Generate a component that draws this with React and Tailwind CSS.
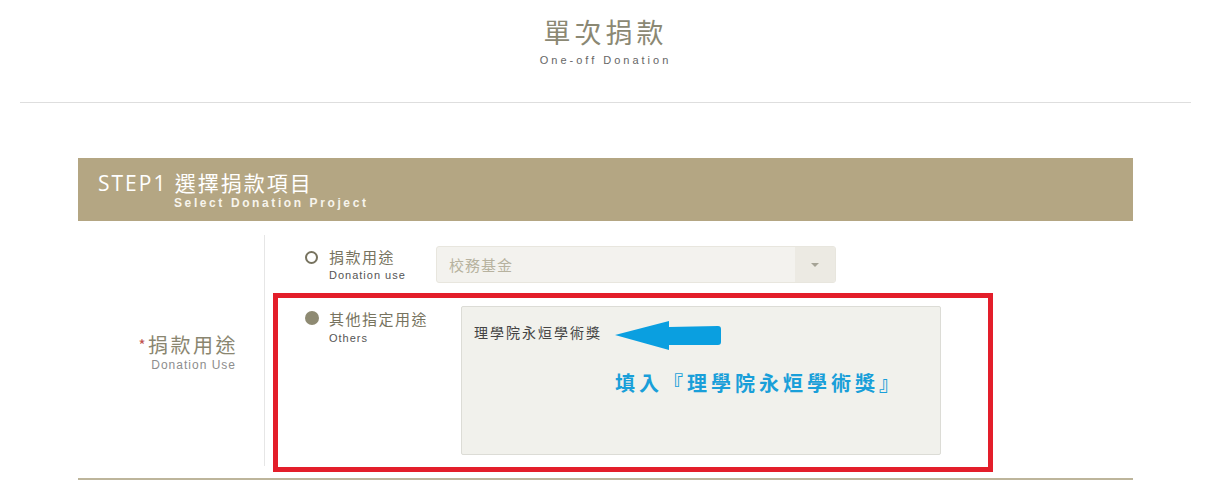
import React from 'react';

const cjk = '"Noto Sans CJK TC", sans-serif';
const latin = '"Liberation Sans", "Noto Sans CJK TC", sans-serif';

const Radio = ({ checked }) =>
  checked ? (
    <span className="block w-[14px] h-[14px] rounded-full bg-[#8e8a72] shrink-0" />
  ) : (
    <span className="block w-[13px] h-[13px] rounded-full border-[2.5px] border-[#77735f] shrink-0" />
  );

const PointerArrow = () => (
  <svg width="108" height="32" viewBox="0 0 108 32" className="absolute left-[152px] top-[13px]">
    <path
      d="M1 15 L55 1 L55 7 L104 6 Q107 6 107 9 L107 22 Q107 25 104 25 L55 25 L55 30 Z"
      fill="#0a9fe0"
    />
  </svg>
);

const App = () => {
  return (
    <div className="w-full bg-white" style={{ fontFamily: latin }}>
      {/* 標題 */}
      <div className="pt-[16px] text-center">
        <h1 className="text-[27px] leading-[32px] tracking-[4px] text-[#8b8873]" style={{ fontFamily: cjk }}>
          單次捐款
        </h1>
        <p className="mt-[5px] text-[11px] leading-[14px] tracking-[3px] text-[#666]">One-off Donation</p>
      </div>
      <div className="mx-[20px] mt-[35px] h-px bg-[#dedede]" />

      {/* STEP1 */}
      <div className="mx-[78px] mt-[55px] border-b-2 border-[#bdb59b]">
        <div className="h-[63px] bg-[#b4a683] pl-[20px] pt-[11px]">
          <div className="text-[21px] leading-[26px] tracking-[2px] text-white" style={{ fontFamily: '"Open Sans", "Noto Sans CJK TC", sans-serif' }}>
            STEP1 <span style={{ fontFamily: cjk }}>選擇捐款項目</span>
          </div>
          <div className="pl-[76px] text-[12px] leading-[14px] font-bold tracking-[2.6px] text-[#f7f4ec]">
            Select Donation Project
          </div>
        </div>

        <div className="flex">
          <div className="w-[186px] shrink-0 flex flex-col items-end justify-center pr-[26px] pt-[6px] text-right">
            <div className="text-[20px] leading-[26px] tracking-[2.5px] text-[#8a8670]" style={{ fontFamily: cjk }}>
              <span className="text-[#c0504d] text-[15px] align-top">*</span>捐款用途
            </div>
            <div className="mr-[2px] text-[12px] leading-[15px] tracking-[1px] text-[#8d8d8d]">Donation Use</div>
          </div>

          <div className="w-px bg-[#e6e6e6] mt-[14px] mb-[12px]" />

          <div className="flex-1 pt-[25px] pb-[6px]">
            {/* 捐款用途 */}
            <div className="flex items-start h-[37px] pl-[40px]">
              <span className="mt-[5px]"><Radio /></span>
              <div className="ml-[11px] w-[107px]">
                <div className="mt-[2px] text-[15px] leading-[18px] tracking-[1.5px] text-[#77735e]" style={{ fontFamily: cjk }}>捐款用途</div>
                <div className="mt-[2px] text-[11px] leading-[14px] tracking-[1px] text-[#555]">Donation use</div>
              </div>
              <div className="flex w-[400px] h-[37px] rounded-[3px] border border-[#e8e6de] bg-[#f3f2ee] overflow-hidden">
                <div className="flex-1 pl-[12px] text-[15px] leading-[35px] tracking-[1px] text-[#b7b29f]" style={{ fontFamily: cjk }}>
                  校務基金
                </div>
                <div className="w-[40px] bg-[#eceae3] flex items-center justify-center">
                  <span className="block w-0 h-0 border-l-[4px] border-r-[4px] border-t-[4px] border-l-transparent border-r-transparent border-t-[#a5a396]" />
                </div>
              </div>
            </div>

            {/* 其他指定用途 */}
            <div className="mt-[10px] ml-[8px] w-[720px] h-[179px] border-[5px] border-[#e31e2a]">
              <div className="flex items-start pl-[27px] pt-[8px]">
                <span className="mt-[5px]"><Radio checked /></span>
                <div className="ml-[10px] w-[132px]">
                  <div className="mt-[4px] text-[15px] leading-[18px] tracking-[1.5px] text-[#77735e]" style={{ fontFamily: cjk }}>其他指定用途</div>
                  <div className="mt-[3px] text-[11px] leading-[14px] tracking-[1px] text-[#555]">Others</div>
                </div>
                <div className="relative w-[480px] h-[149px] rounded-[2px] border border-[#dcdcd6] bg-[#f1f1ec] pl-[12px] pt-[15px]">
                  <div className="text-[14px] leading-[20px] tracking-[2px] text-[#444]" style={{ fontFamily: cjk }}>
                    理學院永烜學術獎
                  </div>
                  <PointerArrow />
                  <div className="absolute left-[153px] top-[64px] text-[20px] leading-[24px] font-bold tracking-[4px] text-[#199fd9]" style={{ fontFamily: cjk }}>
                    填入『理學院永烜學術獎』
                  </div>
                </div>
              </div>
            </div>
          </div>
        </div>
      </div>
    </div>
  );
};

export default App;
